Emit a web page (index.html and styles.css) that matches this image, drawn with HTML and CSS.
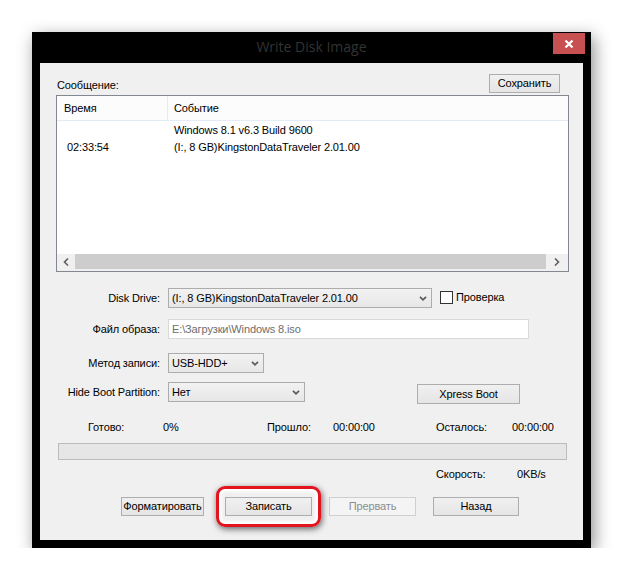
FILE: index.html
```html
<!DOCTYPE html>
<html lang="ru">
<head>
<meta charset="utf-8">
<title>Write Disk Image</title>
<link rel="stylesheet" href="styles.css">
</head>
<body>
<div class="window">
  <div class="titlebar">
    <div></div>
    <div class="title">Write Disk Image</div>
    <div class="tb-right">
      <div class="close">
        <svg width="10" height="10" viewBox="0 0 10 10"><path d="M1.5 1.5 L8.5 8.5 M8.5 1.5 L1.5 8.5" stroke="#fff" stroke-width="2.2" fill="none"/></svg>
      </div>
    </div>
  </div>
  <div class="content">
    <div class="top-row">
      <span class="msg-label">Сообщение:</span>
      <div class="btn btn-save">Сохранить</div>
    </div>
    <div class="list">
      <div class="list-head">
        <div class="lh-time">Время</div>
        <div class="lh-event">Событие</div>
      </div>
      <div class="list-body">
        <div class="lrow"><div class="lc-time"></div><div class="lc-event">Windows 8.1 v6.3 Build 9600</div></div>
        <div class="lrow"><div class="lc-time">02:33:54</div><div class="lc-event">(I:, 8 GB)KingstonDataTraveler 2.01.00</div></div>
      </div>
      <div class="hscroll">
        <div class="sb-arrow sb-left"><svg width="6" height="8" viewBox="0 0 6 8"><path d="M5 0.5 L1.5 4 L5 7.5" stroke="#606060" stroke-width="1.6" fill="none"/></svg></div>
        <div class="sb-thumb"></div>
        <div class="sb-arrow sb-right"><svg width="6" height="8" viewBox="0 0 6 8"><path d="M1 0.5 L4.5 4 L1 7.5" stroke="#606060" stroke-width="1.6" fill="none"/></svg></div>
      </div>
    </div>

    <div class="frow row-disk">
      <div class="flabel">Disk Drive:</div>
      <div class="combo combo-disk"><span>(I:, 8 GB)KingstonDataTraveler 2.01.00</span>
        <svg class="chev" width="8" height="5" viewBox="0 0 8 5"><path d="M1 0.8 L4 3.8 L7 0.8" stroke="#5a5a5a" stroke-width="1.7" fill="none"/></svg></div>
      <div class="check"></div>
      <span class="check-label">Проверка</span>
    </div>
    <div class="frow row-file">
      <div class="flabel">Файл образа:</div>
      <div class="textbox">E:\Загрузки\Windows 8.iso</div>
    </div>
    <div class="frow row-method">
      <div class="flabel">Метод записи:</div>
      <div class="combo combo-method"><span>USB-HDD+</span>
        <svg class="chev" width="8" height="5" viewBox="0 0 8 5"><path d="M1 0.8 L4 3.8 L7 0.8" stroke="#5a5a5a" stroke-width="1.7" fill="none"/></svg></div>
    </div>
    <div class="frow row-hide">
      <div class="flabel">Hide Boot Partition:</div>
      <div class="combo combo-hide"><span>Нет</span>
        <svg class="chev" width="8" height="5" viewBox="0 0 8 5"><path d="M1 0.8 L4 3.8 L7 0.8" stroke="#5a5a5a" stroke-width="1.7" fill="none"/></svg></div>
      <div class="btn btn-xpress">Xpress Boot</div>
    </div>

    <div class="status-row">
      <span class="st st-ready">Готово:</span>
      <span class="st st-pct">0%</span>
      <span class="st st-elapsed">Прошло:</span>
      <span class="st st-time1">00:00:00</span>
      <span class="st st-left">Осталось:</span>
      <span class="st">00:00:00</span>
    </div>
    <div class="progress"></div>
    <div class="speed-row">
      <span class="st st-speed">Скорость:</span>
      <span class="st">0KB/s</span>
    </div>
    <div class="btn-row">
      <div class="btn btn-format">Форматировать</div>
      <div class="btn btn-write">Записать</div>
      <div class="btn btn-abort">Прервать</div>
      <div class="btn btn-back">Назад</div>
    </div>
    <div class="highlight"></div>
  </div>
</div>
</body>
</html>
```

FILE: styles.css
```css
html, body {
  margin: 0;
  padding: 0;
  background: #ffffff;
}
body {
  font-family: "Liberation Sans", Arial, sans-serif;
  font-size: 11px;
  letter-spacing: -0.12px;
  color: #000;
}
.window {
  margin: 32px 0 0 32px;
  width: 559px;
  background: #000;
  box-shadow: 3px 5px 16px rgba(0, 0, 0, 0.45);
  padding-bottom: 8px;
}
.titlebar {
  height: 31px;
  display: grid;
  grid-template-columns: 1fr auto 1fr;
}
.title {
  font-family: "Open Sans", "Noto Sans", sans-serif;
  font-size: 14px;
  letter-spacing: 0;
  color: #333333;
  line-height: 30px;
}
.tb-right {
  display: flex;
  justify-content: flex-end;
}
.close {
  margin-top: 1px;
  margin-right: 6px;
  width: 32px;
  height: 21px;
  background: #c75050;
  display: flex;
  align-items: center;
  justify-content: center;
}
.close svg { display: block; }
.content {
  position: relative;
  margin: 0 8px;
  height: 477px;
  background: #f0f0f0;
  padding: 0 14px 0 16px;
  box-sizing: border-box;
  display: flex;
  flex-direction: column;
}
.top-row {
  margin-top: 11px;
  height: 19px;
  display: flex;
  justify-content: space-between;
  align-items: flex-end;
}
.msg-label {
  padding-left: 1px;
  line-height: 13px;
  padding-bottom: 1px;
}
.btn {
  box-sizing: border-box;
  height: 19px;
  border: 1px solid #adadad;
  background: linear-gradient(#f0f0f0, #e5e5e5);
  display: flex;
  align-items: center;
  justify-content: center;
  line-height: 13px;
}
.btn-save {
  width: 71px;
  margin-right: 9px;
}
.list {
  margin-top: 2px;
  height: 177px;
  box-sizing: border-box;
  border: 1px solid #828790;
  background: #fff;
  display: flex;
  flex-direction: column;
}
.list-head {
  height: 24px;
  border-bottom: 1px solid #e3ebf6;
  background: #fcfcfc;
  display: flex;
  align-items: center;
}
.lh-time {
  width: 103px;
  padding-left: 7px;
  height: 24px;
  line-height: 24px;
  border-right: 1px solid #e6ecf4;
}
.lh-event {
  padding-left: 6px;
}
.list-body {
  flex: 1;
}
.lrow {
  height: 17px;
  display: flex;
  align-items: center;
}
.lc-time {
  width: 107px;
  padding-left: 10px;
}
.hscroll {
  height: 17px;
  display: flex;
  background: #f0f0f0;
}
.sb-arrow {
  display: flex;
  align-items: center;
  justify-content: center;
  height: 15px;
}
.sb-left { width: 18px; }
.sb-right { width: 22px; }
.sb-thumb {
  flex: 1;
  height: 15px;
  background: #cdcdcd;
}
.frow {
  display: flex;
  align-items: center;
  height: 20px;
}
.row-disk { margin-top: 16px; }
.row-file { margin-top: 11px; }
.row-method { margin-top: 14px; }
.row-hide { margin-top: 9px; align-items: flex-start; }
.flabel {
  width: 104px;
  margin-right: 8px;
  text-align: right;
  white-space: nowrap;
}
.row-hide .flabel { line-height: 20px; }
.combo {
  box-sizing: border-box;
  height: 20px;
  border: 1px solid #acacac;
  background: linear-gradient(#f2f2f2, #e7e7e7);
  display: flex;
  align-items: center;
  justify-content: space-between;
  padding: 0 4px 0 3px;
  white-space: nowrap;
}
.chev { display: block; flex: none; }
.combo-disk { width: 264px; }
.combo-method { width: 96px; }
.combo-hide { width: 137px; }
.check {
  margin-left: 8px;
  width: 13px;
  height: 13px;
  box-sizing: border-box;
  border: 1px solid #333;
  background: #fff;
  margin-top: -2px;
}
.check-label {
  margin-left: 3px;
  margin-top: -2px;
}
.textbox {
  box-sizing: border-box;
  width: 361px;
  height: 20px;
  border: 1px solid #d9d9d9;
  background: #fff;
  color: #6d6d6d;
  padding-left: 3px;
  display: flex;
  align-items: center;
}
.btn-xpress {
  margin-left: 112px;
  margin-top: 2px;
  width: 103px;
  height: 20px;
}
.status-row {
  margin-top: 18px;
  height: 14px;
  line-height: 14px;
  display: flex;
  padding-left: 32px;
}
.st { white-space: nowrap; }
.st-ready { width: 75px; }
.st-pct { width: 104px; }
.st-elapsed { width: 66px; }
.st-time1 { width: 103px; }
.st-left { width: 76px; }
.progress {
  margin-top: 9px;
  margin-left: 2px;
  width: 509px;
  height: 17px;
  box-sizing: border-box;
  border: 1px solid #bcbcbc;
  background: #e6e6e6;
}
.speed-row {
  margin-top: 7px;
  height: 14px;
  line-height: 14px;
  display: flex;
  padding-left: 380px;
}
.st-speed { width: 81px; }
.btn-row {
  margin-top: 16px;
  display: flex;
  padding-left: 65px;
}
.btn-format { width: 83px; }
.btn-write { width: 87px; margin-left: 21px; }
.btn-abort {
  width: 87px;
  margin-left: 17px;
  color: #8d8d8d;
  border-color: #cfcfcf;
  background: #f4f4f4;
}
.btn-back { width: 86px; margin-left: 17px; }
.highlight {
  position: absolute;
  left: 176px;
  top: 423px;
  width: 105px;
  height: 41px;
  box-sizing: border-box;
  border: 3px solid #e3141e;
  border-radius: 9px;
  box-shadow: inset 0 0 0 2px #ffffff, inset 0 0 3px 3px rgba(255,255,255,0.8), 1px 2px 6px rgba(0, 0, 0, 0.6);
}
```
